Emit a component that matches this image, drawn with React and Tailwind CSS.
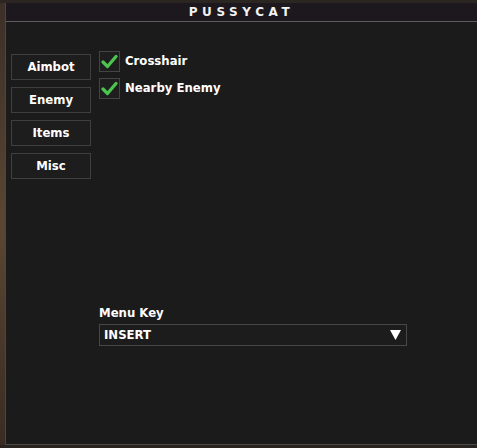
import { useState } from 'react'

const tabs = ['Aimbot', 'Enemy', 'Items', 'Misc']

const Check = () => (
  <svg width="17" height="15" viewBox="0 0 17 15">
    <path d="M2 8 L6.5 12.5 L15 2.5" fill="none" stroke="#4cc44f" strokeWidth="3.2" strokeLinecap="round" strokeLinejoin="round" />
  </svg>
)

const App = () => {
  const [opts, setOpts] = useState({ crosshair: true, nearby: true })

  const toggle = (key) => setOpts({ ...opts, [key]: !opts[key] })

  return (
    <div
      className="w-[477px] h-[448px] flex flex-col bg-[#2a221c] text-white text-[13px] font-bold"
      style={{ fontFamily: '"DejaVu Sans Condensed", "DejaVu Sans", Verdana, sans-serif' }}
    >
      <div className="h-[3px] bg-[#2c2622]" />
      <div className="flex flex-1">
        {/* game backdrop strip */}
        <div className="w-[5px] bg-gradient-to-b from-[#3b2f27] via-[#5a4634] to-[#3a2c22]" />
        <div className="flex-1 flex flex-col border-l border-[#4a4648] bg-[#1b1b1b]">
          {/* title */}
          <div className="h-[19px] flex items-center justify-center bg-[#1c181d] border-b border-[#5e5a60] tracking-[4.6px] text-[12px] text-[#f2f2f2]" style={{ fontFamily: '"DejaVu Sans", sans-serif' }}>
            PUSSYCAT
          </div>

          <div className="flex flex-1 pt-[29px]">
            {/* tabs */}
            <div className="w-[93px] pl-[5px] pt-[3px] flex flex-col gap-[7px]">
              {tabs.map(tab => (
                <button
                  key={tab}
                  className="w-[80px] h-[26px] flex items-center justify-center border border-[#3f3f3f] bg-[#1d1d1d] text-white"
                >
                  {tab}
                </button>
              ))}
            </div>

            {/* content */}
            <div className="flex-1 flex flex-col">
              <div className="flex flex-col gap-[5px]">
                <label className="flex items-center gap-[5px] cursor-pointer" onClick={() => toggle('crosshair')}>
                  <span className="w-[21px] h-[21px] flex items-center justify-center border border-[#444] bg-[#1e1e1e]">
                    {opts.crosshair && <Check />}
                  </span>
                  <span className="pb-[2px]">Crosshair</span>
                </label>
                <label className="flex items-center gap-[5px] cursor-pointer" onClick={() => toggle('nearby')}>
                  <span className="w-[21px] h-[21px] flex items-center justify-center border border-[#444] bg-[#1e1e1e]">
                    {opts.nearby && <Check />}
                  </span>
                  <span className="pb-[2px]">Nearby Enemy</span>
                </label>
              </div>

              <div className="mt-[206px] w-[308px]">
                <div className="leading-[15px] mb-[4px]">Menu Key</div>
                <div className="h-[22px] flex items-center justify-between pl-[4px] pr-[5px] border border-[#474747] bg-[#1c1c1c]">
                  <span>INSERT</span>
                  <svg width="11" height="10" viewBox="0 0 11 10">
                    <path d="M0 0 H11 L5.5 10 Z" fill="#fff" />
                  </svg>
                </div>
              </div>
            </div>
          </div>
          <div className="h-[1px] bg-[#4a4a4a]" />
        </div>
      </div>
      <div className="h-[3px] bg-[#2a2420]" />
    </div>
  )
}

export default App
